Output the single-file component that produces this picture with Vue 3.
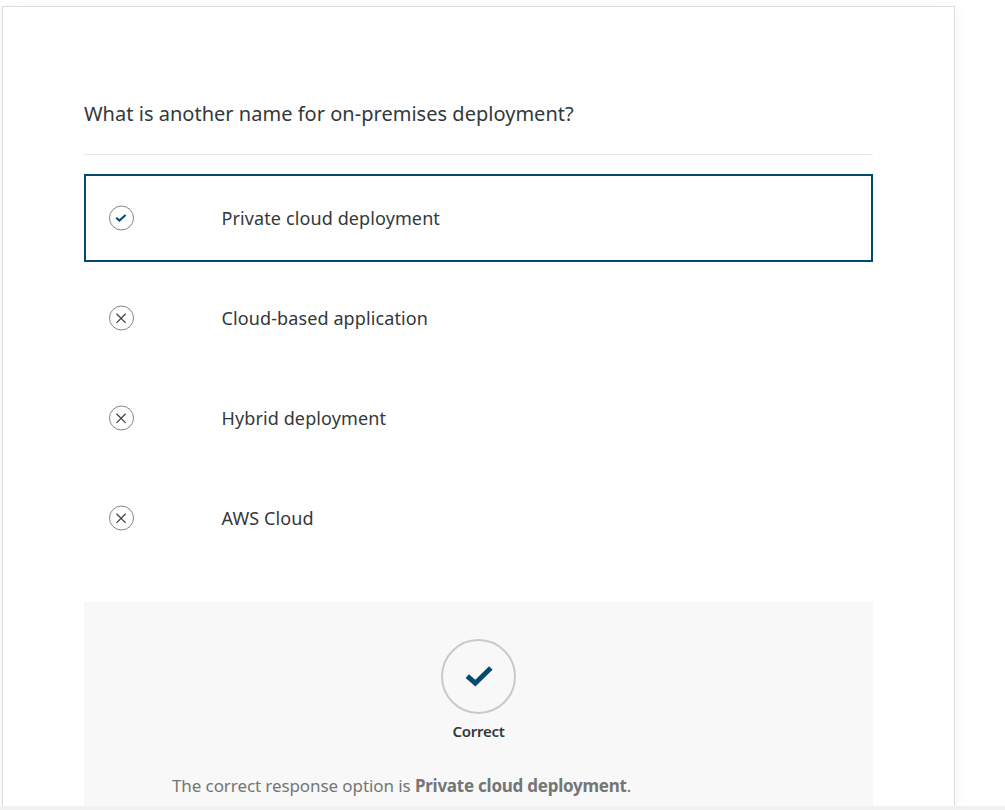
<script setup>
const options = [
  { text: 'Private cloud deployment', correct: true },
  { text: 'Cloud-based application', correct: false },
  { text: 'Hybrid deployment', correct: false },
  { text: 'AWS Cloud', correct: false },
]
</script>

<template>
  <div class="page">
    <main class="card">
      <h1 class="question">What is another name for on-premises deployment?</h1>
      <ul class="options">
        <li v-for="o in options" :key="o.text" class="option" :class="{ selected: o.correct }">
          <svg class="mark" viewBox="0 0 26 26" width="26" height="26" fill="none">
            <circle cx="13.5" cy="13" r="12" stroke="#858585" stroke-width="1" />
            <path v-if="o.correct" d="M8.3 12.7 L11.4 15.6 L17.6 10" stroke="#004b70" stroke-width="2" />
            <path v-else d="M8.5 8.8 L17.6 17.9 M17.6 8.8 L8.5 17.9" stroke="#414547" stroke-width="1.3" />
          </svg>
          <span>{{ o.text }}</span>
        </li>
      </ul>
      <section class="feedback">
        <svg class="big" viewBox="0 0 76 76" width="76" height="76" fill="none">
          <circle cx="37.5" cy="38.5" r="36.5" stroke="#c9c9c9" stroke-width="2" />
          <path d="M26.3 38.2 L34.3 45.2 L49.8 30" stroke="#004b70" stroke-width="5" />
        </svg>
        <strong class="verdict">Correct</strong>
        <p class="explain">The correct response option is <b>Private cloud deployment</b>.</p>
      </section>
    </main>
    <div class="strip"></div>
  </div>
</template>

<style>
body { background: #fff; overflow: hidden; }
</style>
<style scoped>
.page { height: 810px; display: flex; flex-direction: column; padding: 6px 0 0 2px; box-sizing: border-box; overflow: hidden; font-family: "Noto Sans", sans-serif; color: #34383a; }
.card { width: 953px; height: 800px; flex: none; box-sizing: border-box; border: 1px solid #dcdcdc; border-bottom: 0; padding: 91px 81px 0; overflow: hidden; box-shadow: 0 2px 14px rgba(0, 0, 0, 0.05); }
.question { margin: 0; height: 57px; box-sizing: border-box; border-bottom: 1px solid #e9e9e9; font-size: 20px; font-weight: 400; line-height: 32px; letter-spacing: 0.02px; white-space: nowrap; }
.options { list-style: none; margin: 19px 0 0; padding: 0; display: flex; flex-direction: column; gap: 12px; }
.option { height: 88px; box-sizing: border-box; border: 2px solid transparent; display: flex; align-items: center; padding-left: 22px; gap: 87.5px; font-size: 18px; letter-spacing: 0.11px; }
.option.selected { border-color: #004b70; }
.feedback { margin-top: 40px; height: 230px; background: #f8f8f8; display: flex; flex-direction: column; align-items: center; padding-top: 36px; box-sizing: border-box; }
.big { flex: none; }
.verdict { font-size: 15px; line-height: 24px; margin-top: 5px; font-weight: 600; letter-spacing: -0.25px; }
.explain { align-self: flex-start; margin: 30px 0 0 88px; font-size: 17px; line-height: 26px; letter-spacing: -0.09px; color: #757575; white-space: nowrap; }
.explain b { letter-spacing: -0.24px; }
.strip { position: relative; flex: 1; margin-left: -2px; background: #f1f1f1; }
</style>
